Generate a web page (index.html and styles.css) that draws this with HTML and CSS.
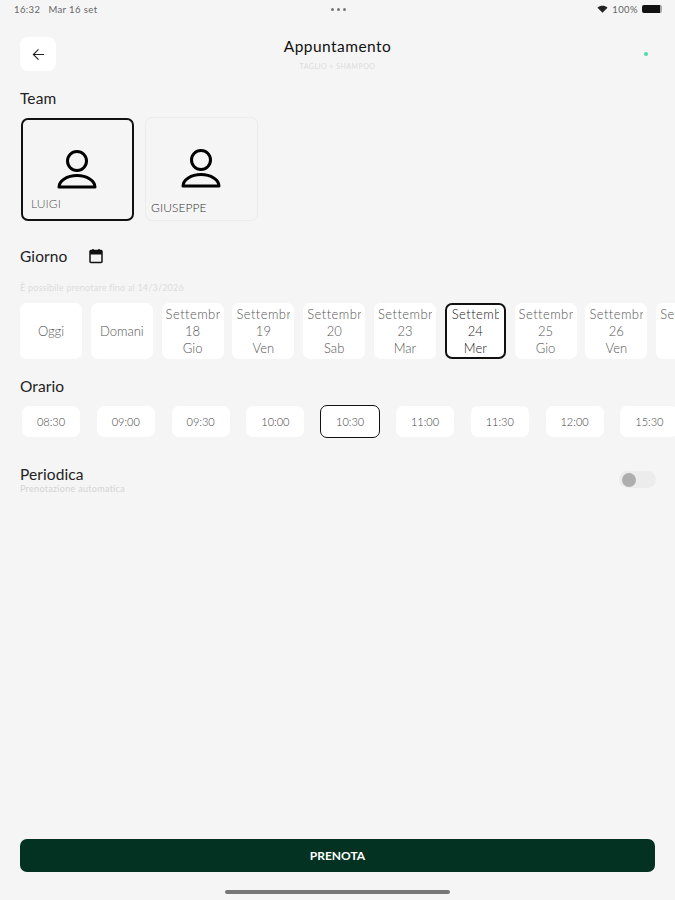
FILE: index.html
```html
<!DOCTYPE html>
<html lang="it">
<head>
<meta charset="utf-8">
<title>Appuntamento</title>
<link rel="stylesheet" href="styles.css">
</head>
<body>
<div class="page">
  <div class="status">
    <span class="status-left"><span>16:32</span><span>Mar 16 set</span></span>
    <span class="status-dots"><i></i><i></i><i></i></span>
    <span class="status-right">
      <svg class="wifi" viewBox="0 0 12 9"><path d="M6 8.6 0.4 3.2C3.5 0.2 8.5 0.2 11.6 3.2Z" fill="#222"/></svg>
      <span>100%</span>
      <span class="battery"></span>
    </span>
  </div>

  <header class="header">
    <div class="header-side">
      <button class="back" aria-label="Indietro">
        <svg viewBox="0 0 16 16" width="15" height="15"><path d="M14 8H2.500M8 2.500 2.500 8 8 13.500" fill="none" stroke="#222" stroke-width="1.200"/></svg>
      </button>
    </div>
    <div class="heading">
      <div class="title">Appuntamento</div>
      <div class="subtitle">TAGLIO + SHAMPOO</div>
    </div>
    <div class="header-side end"><span class="online"></span></div>
  </header>

  <section class="team-section">
    <h2 class="label">Team</h2>
    <div class="team">
      <div class="member selected">
        <svg class="avatar" viewBox="0 0 40 40"><circle cx="20" cy="11" r="9.500" fill="none" stroke="#000" stroke-width="3"/><path d="M2 37C2 31 10 25.500 20 25.500S38 31 38 37Z" fill="none" stroke="#000" stroke-width="3" stroke-linejoin="round"/></svg>
        <span class="name">LUIGI</span>
      </div>
      <div class="member">
        <svg class="avatar" viewBox="0 0 40 40"><circle cx="20" cy="11" r="9.500" fill="none" stroke="#000" stroke-width="3"/><path d="M2 37C2 31 10 25.500 20 25.500S38 31 38 37Z" fill="none" stroke="#000" stroke-width="3" stroke-linejoin="round"/></svg>
        <span class="name">GIUSEPPE</span>
      </div>
    </div>
  </section>

  <section class="day-section">
    <div class="day-head">
      <h2 class="label">Giorno</h2>
      <svg class="calendar" viewBox="0 0 16 16" width="16" height="16"><path d="M2 3.500A1 1 0 0 1 3 2.500H13A1 1 0 0 1 14 3.500V13.500A1 1 0 0 1 13 14.500H3A1 1 0 0 1 2 13.500Z" fill="none" stroke="#111" stroke-width="1.500"/><path d="M2 3H14V6.500H2Z" fill="#111"/><path d="M5 1V3M11 1V3" stroke="#111" stroke-width="1.500"/></svg>
    </div>
    <p class="hint">È possibile prenotare fino al 14/3/2026</p>
    <div class="days">
      <div class="day"><span>Oggi</span></div>
      <div class="day"><span>Domani</span></div>
      <div class="day"><span class="month">Settembre</span><span>18</span><span>Gio</span></div>
      <div class="day"><span class="month">Settembre</span><span>19</span><span>Ven</span></div>
      <div class="day"><span class="month">Settembre</span><span>20</span><span>Sab</span></div>
      <div class="day"><span class="month">Settembre</span><span>23</span><span>Mar</span></div>
      <div class="day selected"><span class="month">Settembre</span><span>24</span><span>Mer</span></div>
      <div class="day"><span class="month">Settembre</span><span>25</span><span>Gio</span></div>
      <div class="day"><span class="month">Settembre</span><span>26</span><span>Ven</span></div>
      <div class="day"><span class="month">Settembre</span><span>27</span><span>Sab</span></div>
    </div>
  </section>

  <section class="time-section">
    <h2 class="label">Orario</h2>
    <div class="times">
      <div class="time">08:30</div>
      <div class="time">09:00</div>
      <div class="time">09:30</div>
      <div class="time">10:00</div>
      <div class="time selected">10:30</div>
      <div class="time">11:00</div>
      <div class="time">11:30</div>
      <div class="time">12:00</div>
      <div class="time">15:30</div>
    </div>
  </section>

  <section class="periodic">
    <div>
      <h2 class="label">Periodica</h2>
      <p class="periodic-hint">Prenotazione automatica</p>
    </div>
    <span class="toggle"><i></i></span>
  </section>

  <div class="spacer"></div>

  <button class="cta">PRENOTA</button>
  <div class="home-bar"></div>
</div>
</body>
</html>
```

FILE: styles.css
```css
* { box-sizing: border-box; }
html, body { margin: 0; padding: 0; }
body {
  background: #f5f5f5;
  color: #222;
  font-family: "Lato", "Liberation Sans", sans-serif;
}
.page {
  width: 675px;
  height: 900px;
  display: flex;
  flex-direction: column;
  overflow: hidden;
}
.status {
  height: 18px;
  padding: 0 13px 0 14px;
  display: grid;
  grid-template-columns: 1fr auto 1fr;
  align-items: center;
  font-size: 9.500px;
  color: #666;
  letter-spacing: 0.400px;
}
.status-left { display: flex; gap: 8px; }
.status-dots { display: flex; gap: 3px; }
.status-dots i { width: 3px; height: 3px; border-radius: 50%; background: #777; }
.status-right { display: flex; justify-content: flex-end; align-items: center; gap: 4px; }
.wifi { width: 11px; height: 8px; }
.battery { width: 20px; height: 8px; border-radius: 2px; background: #111; border-right: 2px solid #aaa; }

.header {
  margin-top: 19px;
  padding: 0 20px;
  height: 36px;
  display: grid;
  grid-template-columns: 1fr auto 1fr;
  align-items: start;
}
.header-side { display: flex; }
.header-side.end { justify-content: flex-end; }
.back {
  width: 36px;
  height: 34px;
  padding: 0;
  border: 0;
  border-radius: 8px;
  background: #fff;
  display: flex;
  align-items: center;
  justify-content: center;
}
.heading { text-align: center; }
.title { font-size: 15.500px; line-height: 18px; letter-spacing: 0.450px; color: #111; }
.subtitle { font-size: 7px; line-height: 9px; margin-top: 7px; color: #dcdcdc; letter-spacing: 0.500px; }
.online {
  width: 4px;
  height: 4px;
  margin: 15px 7px 0 0;
  border-radius: 50%;
  background: #4fdcaa;
}
.label {
  margin: 0;
  font-size: 15.500px;
  line-height: 18px;
  font-weight: 400;
  color: #222;
  letter-spacing: 0.100px;
}

.team-section { padding: 16px 20px 0; }
.team { display: flex; gap: 11px; margin-top: 10px; align-items: center; }
.member {
  width: 113px;
  height: 104px;
  border-radius: 7px;
  border: 1px solid #ececec;
  padding: 31px 0 0 5px;
  display: flex;
  flex-direction: column;
}
.member.selected {
  margin-left: 1px;
  width: 113px;
  height: 103px;
  border: 2px solid #111;
  padding: 30px 0 0 8px;
}
.avatar { width: 40px; height: 40px; margin-left: 30px; flex: none; }
.member.selected .avatar { margin-left: 26px; }
.name { font-size: 12px; line-height: 14px; color: #333; margin-top: 12px; letter-spacing: 0.100px; font-weight: 300; }
.member.selected .name { margin-top: 7px; color: #555; }

.day-section { padding: 26px 0 0 20px; }
.day-head { display: flex; align-items: center; gap: 21px; }
.calendar { flex: none; }
.hint { margin: 18px 0 0; font-size: 9px; line-height: 10px; color: #dcdcdc; letter-spacing: 0.200px; }
.days { display: flex; gap: 8.800px; margin-top: 10px; width: 700px; }
.day {
  flex: 0 0 62px;
  height: 56px;
  background: #fff;
  border-radius: 7px;
  display: flex;
  flex-direction: column;
  align-items: center;
  justify-content: center;
  font-size: 13px;
  line-height: 17px;
  color: #555;
  font-weight: 300;
  overflow: hidden;
  white-space: nowrap;
}
.month { width: 54px; overflow: hidden; text-align: left; flex: none; letter-spacing: 0.450px; }
.day.selected { flex-basis: 61px; border: 2px solid #111; color: #222; }
.day.selected .month { width: 47px; }

.time-section { padding: 18px 0 0 20px; }
.times { display: flex; gap: 16.800px; margin-top: 11px; margin-left: 2px; width: 700px; }
.time {
  flex: 0 0 58px;
  height: 31px;
  background: #fff;
  border-radius: 7px;
  display: flex;
  align-items: center;
  justify-content: center;
  font-size: 11px;
  font-weight: 300;
  color: #444;
}
.time.selected { border: 1.500px solid #111; flex-basis: 60px; height: 33px; margin: -1px; }

.periodic {
  padding: 29px 19px 0 20px;
  display: flex;
  justify-content: space-between;
  align-items: flex-start;
}
.periodic .label { line-height: 16px; }
.periodic-hint { margin: 2px 0 0; font-size: 9px; line-height: 9px; color: #d4d4d4; letter-spacing: 0.300px; }
.toggle {
  margin-top: 5px;
  width: 37px;
  height: 17px;
  border-radius: 9px;
  background: #ececec;
  display: flex;
  align-items: center;
  padding-left: 3px;
}
.toggle i { width: 14px; height: 14px; border-radius: 50%; background: #aeaeae; }

.spacer { flex: 1; }
.cta {
  margin: 0 20px;
  height: 33px;
  flex: none;
  border: 0;
  border-radius: 7px;
  background: #033222;
  color: #fff;
  font: 700 12px "Lato", "Liberation Sans", sans-serif;
}
.home-bar {
  flex: none;
  width: 225px;
  height: 4px;
  margin: 18px auto 6px;
  border-radius: 2px;
  background: #777;
}
```
